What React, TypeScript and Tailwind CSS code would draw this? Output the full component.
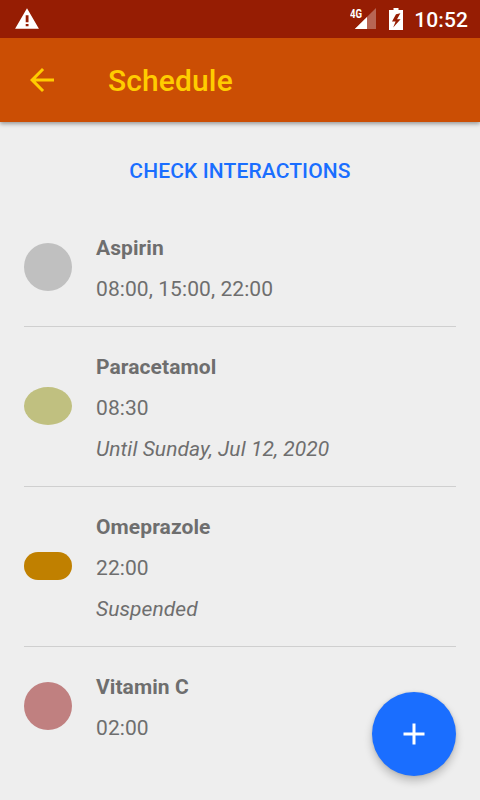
import React from "react";

type Medicine = {
  name: string;
  times: string;
  note?: string;
  icon: React.ReactNode;
};

const medicines: Medicine[] = [
  {
    name: "Aspirin",
    times: "08:00, 15:00, 22:00",
    icon: <div className="h-12 w-12 rounded-full bg-[#c0c0c0]" />,
  },
  {
    name: "Paracetamol",
    times: "08:30",
    note: "Until Sunday, Jul 12, 2020",
    icon: <div className="mb-px h-[38px] w-12 rounded-[50%] bg-[#c0c080]" />,
  },
  {
    name: "Omeprazole",
    times: "22:00",
    note: "Suspended",
    icon: <div className="mb-px h-7 w-12 rounded-full bg-[#c08000]" />,
  },
  {
    name: "Vitamin C",
    times: "02:00",
    icon: <div className="h-12 w-12 rounded-full bg-[#c08080]" />,
  },
];

const StatusBar = () => (
  <div className="relative z-10 flex h-[38px] items-center bg-[#961d03] pr-3 pl-3.5 text-white">
    <svg className="h-[26px] w-[26px]" viewBox="0 0 24 24" fill="currentColor">
      <path
        fillRule="evenodd"
        d="M1 21h22L12 2 1 21zM10.8 18.6h2.6v-2h-2.6zM10.8 15.1h2.6V8.6h-2.6z"
      />
    </svg>
    <div className="ml-auto flex items-center">
      <span className="-mt-[11px] w-4 origin-left scale-x-[0.8] text-[12px] leading-3 font-bold">
        4G
      </span>
      <svg className="-ml-3 h-[22px] w-[22px]" viewBox="0 0 22 22" fill="currentColor">
        <path d="M22 0v21H0.8z" opacity="0.32" />
        <path d="M13 8.9V21H0.8z" />
      </svg>
      <svg className="-mt-px ml-[13px] h-[22px] w-[14px]" viewBox="0 0 14 22" fill="currentColor">
        <path
          fillRule="evenodd"
          d="M4.5 0h5v2H14v20H0V2h4.5zM11.4 5.2L7 6.2 3 13.4h3.6L4.2 19.6 11.6 11.2H8z"
        />
      </svg>
      <span className="mt-px ml-[11px] text-[21px] leading-6 font-medium tracking-[0.1px]">
        10:52
      </span>
    </div>
  </div>
);

const Toolbar = () => (
  <header className="relative flex h-[84px] items-center bg-[#cb4e04] px-6 text-[#ffcc00] shadow-[0_2px_4px_rgba(0,0,0,0.35)]">
    <button aria-label="Back">
      <svg className="h-9 w-9" viewBox="0 0 24 24" fill="currentColor">
        <path d="M20 11H7.83l5.59-5.59L12 4l-8 8 8 8 1.41-1.41L7.83 13H20v-2z" />
      </svg>
    </button>
    <h1 className="mt-0.5 ml-12 text-[30px] leading-9 font-medium tracking-[0.12px]">
      Schedule
    </h1>
  </header>
);

const MedicineRow = ({ medicine }: { medicine: Medicine }) => (
  <li className="flex items-center gap-6 border-b border-[#cfcfcf] last:border-b-0">
    {medicine.icon}
    <div className="pt-5 pb-4 text-[21px] leading-[41px] tracking-[0.08px]">
      <p className="font-bold">{medicine.name}</p>
      <p>{medicine.times}</p>
      {medicine.note && <p className="italic">{medicine.note}</p>}
    </div>
  </li>
);

const App = () => {
  return (
    <div className="relative h-[800px] w-[480px] overflow-hidden bg-[#eeeeee] font-['Roboto',sans-serif] text-[#6e6e6e]">
      <StatusBar />
      <Toolbar />
      <main className="px-6">
        <button className="flex h-[86px] w-full items-center justify-center pt-3.5 text-[21px] font-medium tracking-[0.12px] text-[#1a6eff]">
          CHECK INTERACTIONS
        </button>
        <ul>
          {medicines.map((medicine) => (
            <MedicineRow key={medicine.name} medicine={medicine} />
          ))}
        </ul>
      </main>
      <button
        aria-label="Add medicine"
        className="absolute right-6 bottom-6 flex h-[84px] w-[84px] items-center justify-center rounded-full bg-[#1a6eff] text-white shadow-[0_5px_8px_rgba(0,0,0,0.22),0_0_3px_rgba(0,0,0,0.12)]"
      >
        <svg className="h-9 w-9" viewBox="0 0 24 24" fill="currentColor">
          <path d="M19 13h-6v6h-2v-6H5v-2h6V5h2v6h6z" />
        </svg>
      </button>
    </div>
  );
};

export default App;
